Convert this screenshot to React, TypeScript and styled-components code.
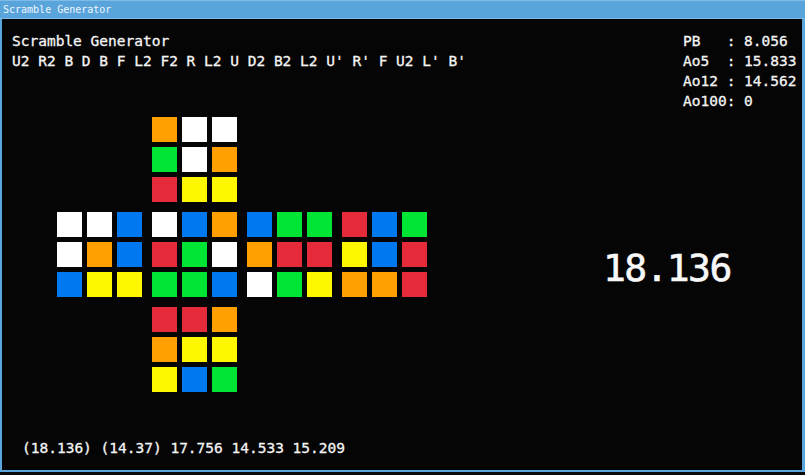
import React from "react";
import styled, { createGlobalStyle } from "styled-components";

const Global = createGlobalStyle`
  html, body { margin: 0; padding: 0; background: #0b0b0b; }
  body { width: 805px; height: 475px; overflow: hidden; }
`;

const Window = styled.div`
  box-sizing: border-box;
  width: 805px;
  height: 472px;
  display: flex;
  flex-direction: column;
  border-left: 2px solid #5ba5dd;
  border-right: 3px solid #5ba5dd;
  border-bottom: 2px solid #5ba5dd;
  background: #050505;
`;

const TitleBar = styled.div`
  height: 19px;
  box-sizing: border-box;
  background: #5aa4dc;
  border-top: 1px solid #7dbbe8;
  border-bottom: 1px solid #7dbbe8;
  margin-left: -2px;
  margin-right: -3px;
  padding-left: 3px;
  font-family: "DejaVu Sans Mono", monospace;
  font-size: 10px;
  line-height: 17px;
  color: #eef6fc;
`;

const Content = styled.div`
  flex: 1;
  display: flex;
  flex-direction: column;
  padding: 12px 0 0 10px;
  font-family: "DejaVu Sans Mono", "Liberation Mono", monospace;
  font-size: 14.5px;
  line-height: 20px;
  color: #f4f4f4;
  -webkit-text-stroke: 0.3px #f4f4f4;
`;

const TopRow = styled.div`
  display: flex;
  justify-content: space-between;
`;

const Lines = styled.div`
  white-space: pre;
`;

const Stats = styled.div`
  white-space: pre;
  width: 119px;
`;

const MainRow = styled.div`
  display: flex;
  margin-top: 6px;
  padding-left: 45px;
`;

const Net = styled.div`
  display: grid;
  grid-template-columns: repeat(4, 85px);
  grid-template-rows: repeat(3, 85px);
  gap: 10px;
`;

const Face = styled.div<{ $col: number; $row: number }>`
  grid-column: ${(p) => p.$col};
  grid-row: ${(p) => p.$row};
  display: grid;
  grid-template-columns: repeat(3, 25px);
  grid-template-rows: repeat(3, 25px);
  gap: 5px;
`;

const Sticker = styled.div<{ $c: string }>`
  background: ${(p) => p.$c};
`;

const Timer = styled.div`
  margin-left: 176px;
  padding-top: 131px;
  font-size: 38px;
  letter-spacing: -1.6px;
  line-height: 40px;
  color: #f8f8f8;
  -webkit-text-stroke: 0.6px #f8f8f8;
`;

const Footer = styled.div`
  margin-top: auto;
  margin-bottom: 12px;
  padding-left: 10px;
  white-space: pre;
`;

const C: Record<string, string> = {
  W: "#ffffff",
  O: "#ffa000",
  G: "#00e533",
  R: "#e52b3a",
  B: "#0078ef",
  Y: "#fff700",
};

const faces: { col: number; row: number; s: string }[] = [
  { col: 2, row: 1, s: "OWWGWORYY" },
  { col: 1, row: 2, s: "WWBWOBBYY" },
  { col: 2, row: 2, s: "WBORGWGGB" },
  { col: 3, row: 2, s: "BGGORRWGY" },
  { col: 4, row: 2, s: "RBGYBROOR" },
  { col: 2, row: 3, s: "RROOYYYBG" },
];

export default function App() {
  return (
    <>
      <Global />
      <Window>
        <TitleBar>Scramble Generator</TitleBar>
        <Content>
          <TopRow>
            <Lines>
              {"Scramble Generator\nU2 R2 B D B F L2 F2 R L2 U D2 B2 L2 U' R' F U2 L' B'"}
            </Lines>
            <Stats>{"PB   : 8.056\nAo5  : 15.833\nAo12 : 14.562\nAo100: 0"}</Stats>
          </TopRow>
          <MainRow>
            <Net>
              {faces.map((f, i) => (
                <Face key={i} $col={f.col} $row={f.row}>
                  {f.s.split("").map((ch, j) => (
                    <Sticker key={j} $c={C[ch]} />
                  ))}
                </Face>
              ))}
            </Net>
            <Timer>18.136</Timer>
          </MainRow>
          <Footer>{"(18.136) (14.37) 17.756 14.533 15.209"}</Footer>
        </Content>
      </Window>
    </>
  );
}
